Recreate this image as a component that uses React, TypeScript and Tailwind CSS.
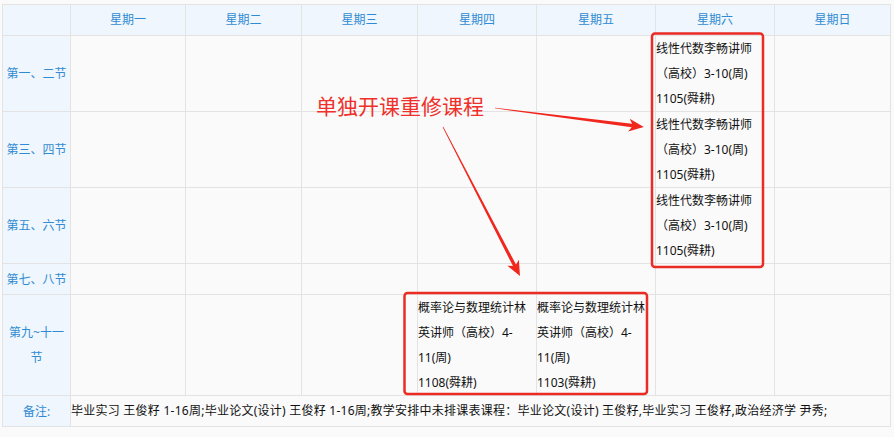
import React from "react";

const FONT = { fontFamily: '"Noto Sans", "Noto Sans CJK SC", sans-serif' };

const days = ["星期一", "星期二", "星期三", "星期四", "星期五", "星期六", "星期日"];

const sat = (
  <>
    线性代数李畅讲师
    <br />
    （高校）3-10(周)
    <br />
    1105(舜耕)
  </>
);

function Cell({ children, className = "" }: { children?: React.ReactNode; className?: string }) {
  return <div className={`bg-[#fafafa] text-[12px] leading-[25px] text-[#111] whitespace-nowrap ${className}`}>{children}</div>;
}

function Label({ children }: { children: React.ReactNode }) {
  return (
    <div className="bg-[#eff6fd] text-[#2f8bd3] text-[12px] leading-[25px] flex items-center justify-center text-center px-[1px]">
      {children}
    </div>
  );
}

function Arrow({ x, y, angle, len }: { x: number; y: number; angle: number; len: number }) {
  const L = len;
  const pts = `0,-0.35 ${L - 12},-1.7 ${L - 15},-6.5 ${L},0 ${L - 15},6.5 ${L - 12},1.7 0,0.35`;
  return (
    <g transform={`translate(${x} ${y}) rotate(${angle})`}>
      <polygon points={pts} fill="#f1271e" />
    </g>
  );
}

export default function App() {
  const empty = (n: number) => Array.from({ length: n }, (_, i) => <Cell key={i} />);
  return (
    <div className="relative w-[894px] h-[437px] bg-[#fafafa] overflow-hidden" style={FONT}>
      <div className="pt-[4px] pl-[2px]">
        <div className="grid grid-cols-[67px_114px_115px_115px_118px_118px_118px_115px] grid-rows-[30px_75px_75px_75px_30px_100px_30px] gap-px bg-[#e3e3e3] border border-[#e3e3e3] w-[889px]">
          <div className="bg-[#eff6fd]" />
          {days.map((d) => (
            <div key={d} className="bg-[#eff6fd] text-[#2f8bd3] text-[12px] flex items-center justify-center">
              {d}
            </div>
          ))}

          <Label>第一、二节</Label>
          {empty(5)}
          <Cell>{sat}</Cell>
          <Cell />

          <Label>第三、四节</Label>
          {empty(5)}
          <Cell>{sat}</Cell>
          <Cell />

          <Label>第五、六节</Label>
          {empty(5)}
          <Cell>{sat}</Cell>
          <Cell />

          <Label>第七、八节</Label>
          {empty(7)}

          <Label>
            第九~十一
            <br />
            节
          </Label>
          {empty(3)}
          <Cell>
            概率论与数理统计林
            <br />
            英讲师（高校）4-
            <br />
            11(周)
            <br />
            1108(舜耕)
          </Cell>
          <Cell>
            概率论与数理统计林
            <br />
            英讲师（高校）4-
            <br />
            11(周)
            <br />
            1103(舜耕)
          </Cell>
          {empty(2)}

          <Label>备注:</Label>
          <div className="col-span-7 bg-[#fafafa] text-[12px] text-[#111] tracking-[0.25px] flex items-center whitespace-nowrap">
            毕业实习 王俊籽 1-16周;毕业论文(设计) 王俊籽 1-16周;教学安排中未排课表课程：毕业论文(设计) 王俊籽,毕业实习 王俊籽,政治经济学 尹秀;
          </div>
        </div>
      </div>

      <div className="absolute left-[316px] top-[96px] text-[21px] leading-[21px] text-[#f0302a]">单独开课重修课程</div>

      <svg className="absolute left-0 top-0 pointer-events-none" width="894" height="437" viewBox="0 0 894 437">
        <rect x="652" y="33.5" width="111" height="233.5" rx="3" fill="none" stroke="#eb2c25" strokeWidth="2.5" />
        <rect x="404.5" y="293" width="242.5" height="101" rx="3" fill="none" stroke="#eb2c25" strokeWidth="2.5" />
        <Arrow x={495} y={108} angle={7.27} len={150} />
        <Arrow x={443} y={127} angle={62.67} len={167.7} />
      </svg>
    </div>
  );
}
